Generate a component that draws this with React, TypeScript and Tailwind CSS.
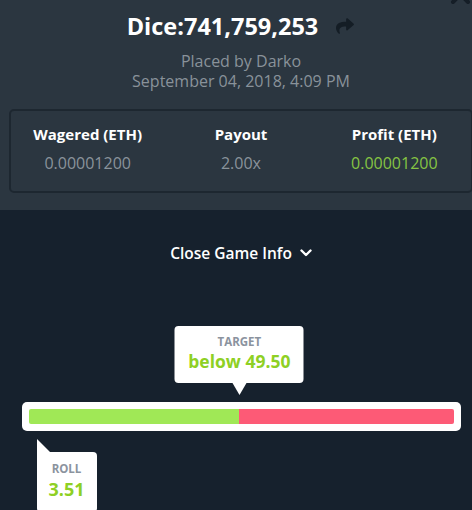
import { FaShare } from "react-icons/fa";

const font = { fontFamily: "'Open Sans', Lato, sans-serif" };

function Stat({ label, value, green }: { label: string; value: string; green?: boolean }) {
    return (
        <div className="flex flex-col items-center">
            <div className="text-[15px] font-bold leading-[20px] text-white">{label}</div>
            <div className={"mt-[9px] text-[16px] leading-[20px] " + (green ? "text-[#86c443]" : "text-[#8a939b]")}>
                {value}
            </div>
        </div>
    );
}

export default function App() {
    const target = 49.5;
    const roll = 3.51;

    return (
        <div className="relative h-[510px] w-[472px] overflow-hidden bg-[#16212d]" style={font}>
            <div className="w-[482px]">

                {/* header */}
                <div className="h-[210px] bg-[#2b3640] pt-[11px]">
                    <div className="flex items-center justify-center gap-[17px]">
                        <h1 className="text-[23.5px] font-bold leading-[30px] text-white">Dice:741,759,253</h1>
                        <FaShare className="h-[18px] w-[20px] text-[#141d25]" />
                    </div>

                    <div className="mt-[10px] text-center text-[16px] leading-[20px] text-[#89929a]">
                        <div>Placed by Darko</div>
                        <div>September 04, 2018, 4:09 PM</div>
                    </div>

                    <div className="mx-[9px] mt-[18px] grid h-[84px] grid-cols-3 rounded-[5px] border-2 border-[#1d2730] pt-[13px]">
                        <Stat label="Wagered (ETH)" value="0.00001200" />
                        <Stat label="Payout" value="2.00x" />
                        <Stat label="Profit (ETH)" value="0.00001200" green />
                    </div>
                </div>

                {/* game info */}
                <div className="flex h-[300px] flex-col items-center">
                    <button className="mt-[33px] flex items-center gap-[8px] text-[15.5px] font-semibold leading-[20px] text-white">
                        Close Game Info
                        <svg width="12" height="8" viewBox="0 0 12 8">
                            <path d="M1.5 1.5 L6 6 L10.5 1.5" stroke="white" strokeWidth="2.4" fill="none" strokeLinecap="round" strokeLinejoin="round" />
                        </svg>
                    </button>

                    <div className="relative mt-[139px] w-[439px]">
                        {/* target tooltip */}
                        <div
                            className="absolute bottom-[48px] w-[129px] -translate-x-1/2 rounded-[4px] bg-white pb-[11px] pt-[9px] text-center"
                            style={{ left: `${7 + (target / 100) * 426}px` }}
                        >
                            <div className="text-[11.5px] font-bold leading-[13px] text-[#8b939e]">TARGET</div>
                            <div className="mt-[2px] text-[17.5px] font-bold leading-[22px] text-[#8ed024]">below 49.50</div>
                            <div className="absolute left-1/2 top-full h-0 w-0 -translate-x-1/2 border-x-[7px] border-t-[12px] border-x-transparent border-t-white" />
                        </div>

                        {/* bar */}
                        <div className="rounded-[5px] bg-white p-[7px]">
                            <div className="flex h-[15px] overflow-hidden rounded-[2px]">
                                <div className="bg-[#a0e856]" style={{ width: `${target}%` }} />
                                <div className="flex-1 bg-[#fd5a76]" />
                            </div>
                        </div>

                        {/* roll tooltip */}
                        <div
                            className="absolute top-[50px] w-[60px] rounded-[4px] rounded-tl-none bg-white pb-[12px] pt-[10px] text-center"
                            style={{ left: `${15 + (roll / 100) * 0}px` }}
                        >
                            <div className="text-[11.5px] font-bold leading-[13px] text-[#8b939e]">ROLL</div>
                            <div className="mt-[3px] text-[18px] font-bold leading-[22px] text-[#8ed024]">3.51</div>
                            <div className="absolute bottom-full left-0 h-0 w-0 border-b-[13px] border-r-[13px] border-b-white border-r-transparent" />
                        </div>
                    </div>
                </div>
            </div>

            {/* close icon, cut off at top */}
            <svg className="absolute right-[1px] top-[-16px]" width="21" height="21" viewBox="0 0 21 21">
                <path d="M3 3 L18 18 M18 3 L3 18" stroke="#151e27" strokeWidth="4" strokeLinecap="round" />
            </svg>
        </div>
    );
}
